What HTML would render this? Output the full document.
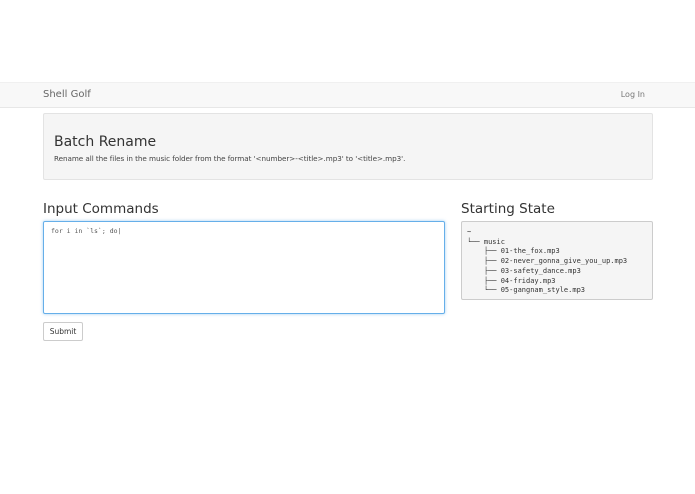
<!DOCTYPE html>
<html><head><style>
*{box-sizing:border-box;margin:0;padding:0}
body{width:695px;height:494px;background:#fff;font-family:"DejaVu Sans","Liberation Sans",sans-serif;color:#333;position:relative;overflow:hidden}
.nav{position:absolute;left:0;top:82px;width:695px;height:26px;background:#f8f8f8;border-top:1px solid #f0f0f0;border-bottom:1px solid #e7e7e7}
.brand{position:absolute;left:43px;top:6px;font-size:10px;color:#666}
.login{position:absolute;right:50px;top:7px;font-size:8px;color:#777}
.jumbo{position:absolute;left:43px;top:113px;width:610px;height:67px;background:#f5f5f5;border:1px solid #e3e3e3;border-radius:2px}
.jumbo h1{position:absolute;left:10px;top:20px;font-size:14px;font-weight:normal;color:#333}
.jumbo p{position:absolute;left:10px;top:40px;font-size:7.2px;color:#444;letter-spacing:-0.05px}
h2{position:absolute;font-size:13.5px;font-weight:normal;color:#333}
.ta{position:absolute;left:43px;top:221px;width:402px;height:93px;border:1px solid #66afe9;border-radius:2px;box-shadow:0 0 3px rgba(102,175,233,.6);font-family:"DejaVu Sans Mono",monospace;font-size:6.5px;padding:5px 7px;color:#555}
.btn{position:absolute;left:43px;top:322px;width:40px;height:19px;border:1px solid #ccc;border-radius:2px;font-size:7.5px;text-align:center;line-height:17px;color:#333;background:#fff}
pre{position:absolute;left:461px;top:221px;width:192px;height:79px;background:#f5f5f5;border:1px solid #ccc;border-radius:2px;font-family:"DejaVu Sans Mono",monospace;font-size:7px;line-height:9.7px;padding:6px 5px;color:#333}
</style></head><body>
<div class="nav"><div class="brand">Shell Golf</div><div class="login">Log In</div></div>
<div class="jumbo"><h1>Batch Rename</h1><p>Rename all the files in the music folder from the format '&lt;number&gt;-&lt;title&gt;.mp3' to '&lt;title&gt;.mp3'.</p></div>
<h2 style="left:43px;top:201px">Input Commands</h2>
<h2 style="left:461px;top:201px">Starting State</h2>
<div class="ta">for i in `ls`; do|</div>
<div class="btn">Submit</div>
<pre>~
└── music
    ├── 01-the_fox.mp3
    ├── 02-never_gonna_give_you_up.mp3
    ├── 03-safety_dance.mp3
    ├── 04-friday.mp3
    └── 05-gangnam_style.mp3</pre>
</body></html>
